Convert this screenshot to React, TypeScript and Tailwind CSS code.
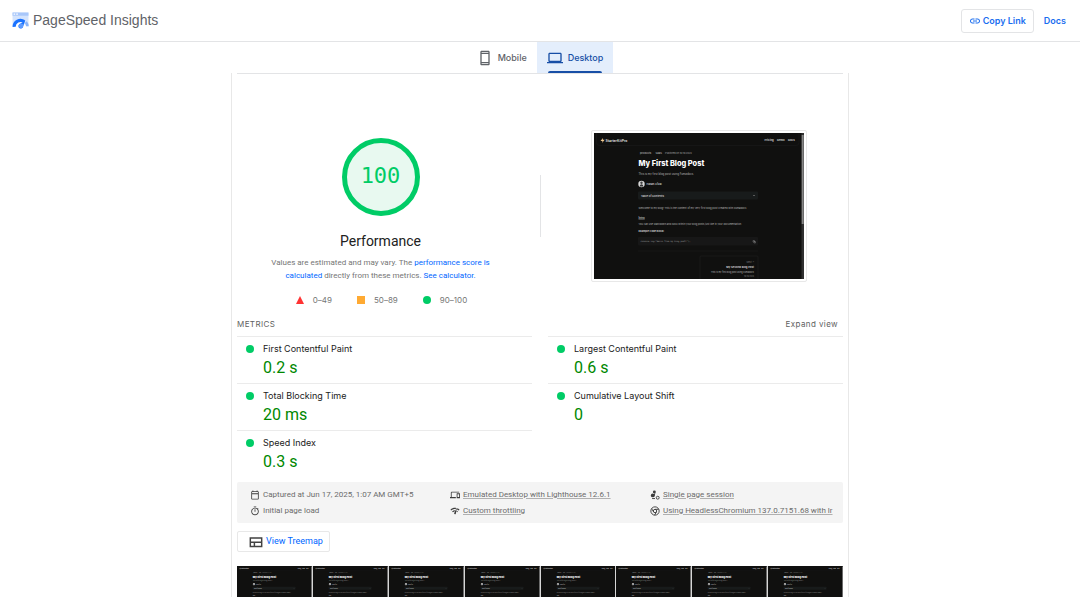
import type { ReactNode } from "react";

type IconProps = { className?: string };

type Metric = { label: string; value: string };

const LEFT_METRICS: Metric[] = [
  { label: "First Contentful Paint", value: "0.2 s" },
  { label: "Total Blocking Time", value: "20 ms" },
  { label: "Speed Index", value: "0.3 s" },
];

const RIGHT_METRICS: Metric[] = [
  { label: "Largest Contentful Paint", value: "0.6 s" },
  { label: "Cumulative Layout Shift", value: "0" },
];

const FRAMES = [0, 1, 2, 3, 4, 5, 6, 7];

function Icon({ d, className }: IconProps & { d: string }) {
  return (
    <svg viewBox="0 0 24 24" fill="currentColor" className={className} aria-hidden="true">
      <path d={d} />
    </svg>
  );
}

const ICONS = {
  link: "M3.9 12c0-1.71 1.39-3.1 3.1-3.1h4V7H7c-2.76 0-5 2.24-5 5s2.24 5 5 5h4v-1.9H7c-1.71 0-3.1-1.39-3.1-3.1zM8 13h8v-2H8v2zm9-6h-4v1.9h4c1.71 0 3.1 1.39 3.1 3.1s-1.39 3.1-3.1 3.1h-4V17h4c2.76 0 5-2.24 5-5s-2.24-5-5-5z",
  phone:
    "M17 1H7c-1.1 0-2 .9-2 2v18c0 1.1.9 2 2 2h10c1.1 0 2-.9 2-2V3c0-1.1-.9-2-2-2zm0 20H7v-1h10v1zm0-3H7V6h10v12zm0-14H7V3h10v1z",
  laptop:
    "M20 18c1.1 0 2-.9 2-2V6c0-1.1-.9-2-2-2H4c-1.1 0-2 .9-2 2v10c0 1.1.9 2 2 2H0v2h24v-2h-4zM4 6h16v10H4V6z",
  date: "M19 3h-1V1h-2v2H8V1H6v2H5c-1.1 0-2 .9-2 2v16c0 1.1.9 2 2 2h14c1.1 0 2-.9 2-2V5c0-1.1-.9-2-2-2zm0 18H5V10h14v11zm0-13H5V5h14v3z",
  devices:
    "M4 6h18V4H4c-1.1 0-2 .9-2 2v11H0v3h14v-3H4V6zm19 2h-6c-.55 0-1 .45-1 1v10c0 .55.45 1 1 1h6c.55 0 1-.45 1-1V9c0-.55-.45-1-1-1zm-1 9h-4v-7h4v7z",
  timer:
    "M15 1H9v2h6V1zm-4 13h2V8h-2v6zm8.03-6.61l1.42-1.42c-.43-.51-.9-.99-1.41-1.41l-1.42 1.42C16.07 4.74 14.12 4 12 4c-4.97 0-9 4.03-9 9s4.02 9 9 9 9-4.03 9-9c0-2.12-.74-4.07-1.97-5.61zM12 20c-3.87 0-7-3.13-7-7s3.13-7 7-7 7 3.13 7 7-3.13 7-7 7z",
  network:
    "M15.9 5c-.17 0-.32.09-.41.23l-.07.15-5.18 11.65c-.16.29-.26.61-.26.96 0 1.11.9 2.01 2.01 2.01.96 0 1.77-.68 1.96-1.59l.01-.03L16.4 5.5c0-.28-.22-.5-.5-.5zM1 9l2 2c2.88-2.88 6.79-4.08 10.53-3.62l1.19-2.68C9.89 3.84 4.74 5.27 1 9zm20 2l2-2c-1.64-1.64-3.55-2.82-5.59-3.57l-.53 2.82c1.5.62 2.9 1.53 4.12 2.75zm-4 4l2-2c-.8-.8-1.7-1.42-2.66-1.89l-.55 2.92c.42.27.83.59 1.21.97zM5 13l2 2c1.13-1.13 2.56-1.79 4.03-2l1.28-2.88c-2.63-.08-5.3.87-7.31 2.88z",
  treemap: "M1 4v17h22V4H1zm2.500 2.500h17V11h-17V6.500zm0 12V13.500H8v5H3.500zm7 0v-5h10v5h-10z",
};

function PageSpeedLogo({ className }: IconProps) {
  return (
    <svg viewBox="0 0 32 32" className={className} aria-hidden="true">
      <path d="M1 1h30v26h-4L16 14 5 27H1z" fill="#d3e3fd" />
      <path d="M1 1h30v6H1z" fill="#a8c7fa" />
      <path d="M3 4h3M8 4h3" stroke="#fff" strokeWidth="2" />
      <path d="M4 28a12 12 0 0 1 19-10" fill="none" stroke="#1a73ff" strokeWidth="6" />
      <path d="M26 19a12 12 0 0 1 3 8" fill="none" stroke="#8ab4f8" strokeWidth="5" />
      <path d="M25 16l-4 11a4.500 4.500 0 1 1-7-4z" fill="#1a73ff" />
      <circle cx="17" cy="26" r="4.500" fill="#5e9bff" />
    </svg>
  );
}

function SamplesIcon({ className }: IconProps) {
  return (
    <svg viewBox="0 0 24 24" fill="currentColor" className={className} aria-hidden="true">
      <circle cx="10.500" cy="4.500" r="3.500" />
      <circle cx="6.500" cy="13" r="4.500" />
      <path d="M7 17l4-10 2 1-3 8z" />
      <circle cx="18.500" cy="18.500" r="3.500" fill="none" stroke="currentColor" strokeWidth="2.2" />
      <path d="M5 20.500h7" stroke="currentColor" strokeWidth="2.2" />
    </svg>
  );
}

function ChromeIcon({ className }: IconProps) {
  return (
    <svg
      viewBox="0 0 24 24"
      fill="none"
      stroke="currentColor"
      strokeWidth="2.2"
      className={className}
      aria-hidden="true"
    >
      <circle cx="12" cy="12" r="10" />
      <circle cx="12" cy="12" r="4" />
      <path d="M12 8h9M8.500 14L4 6.500M15.500 14L11 22" />
    </svg>
  );
}

// The tested page, drawn once and scaled for the preview and the filmstrip
function PageShot({ className }: IconProps) {
  return (
    <svg
      viewBox="0 0 210 146"
      className={className}
      fontFamily="Inter, sans-serif"
      fill="#cfcfcf"
      role="img"
      aria-label="Page screenshot"
    >
      <rect width="210" height="146" fill="#10100f" />
      <path d="M2.500 0v9.500a3 3 0 0 0 3 3h196.500a3 3 0 0 0 3-3V0" fill="none" stroke="#1b1b1b" strokeWidth=".6" />
      <path d="M9 5L6.500 8h2L8 10l2.700-3.200H8.800z" fill="#f0c890" />
      <g fontSize="3.400" fontWeight="700">
        <text x="11.500" y="8.700">StarterKitPro</text>
        <text x="170.500" y="8.300" fontSize="2.700">Pricing</text>
        <text x="183" y="8.300" fontSize="2.700">Demo</text>
        <text x="194" y="8.300" fontSize="2.700">Docs</text>
      </g>
      <g fontSize="2.600" fill="#a5a5a5">
        <text x="46" y="20.500" fontWeight="600">products</text>
        <text x="61.500" y="20.500" fontWeight="600">SaaS</text>
        <text x="71" y="20.500" fontSize="2.300">Published on 10/10/2024</text>
      </g>
      <text x="44.500" y="32.800" fontSize="7.400" fontWeight="800" fill="#fff">My First Blog Post</text>
      <text x="44.500" y="42" fontSize="2.800" fill="#b5b5b5">This is my first blog post using Fumadocs.</text>
      <circle cx="47.500" cy="51" r="3.200" fill="#d8d8d8" />
      <path d="M45.800 53.500c0-3 3.400-3 3.400 0z" fill="#333" />
      <circle cx="47.500" cy="49.800" r="1.200" fill="#444" />
      <text x="52.500" y="52" fontSize="2.600" fontWeight="600">Hasan Afzal</text>
      <rect x="44" y="58.500" width="120" height="8" rx="1" fill="#181b1b" />
      <text x="47" y="63.600" fontSize="2.700" fontWeight="600">Table of Contents</text>
      <path d="M159 62l1 1 1-1" fill="none" stroke="#999" strokeWidth=".5" />
      <text x="44.500" y="75.700" fontSize="2.550" fill="#b5b5b5">
        Welcome to my blog! This is the content of my very first blog post created with Fumadocs.
      </text>
      <text x="44.500" y="85.500" fontSize="2.800" fontWeight="600" textDecoration="underline">Intro</text>
      <text x="44.500" y="91.800" fontSize="2.500" fill="#b5b5b5">
        You can use Markdown and MDX within your blog posts just like in your documentation.
      </text>
      <text x="44.500" y="99.200" fontSize="2.500" fontWeight="700">Example Code Block:</text>
      <rect x="44" y="104" width="120" height="8.500" rx="1" fill="#171717" />
      <text x="46.500" y="109.300" fontSize="2.100" fontFamily="DejaVu Sans Mono, monospace" fill="#aaa">
        console.log("Hello from my blog post!");
      </text>
      <path d="M159 107.500h1.500v1.500H159zM160 108.500h1.500v1.500H160z" fill="none" stroke="#999" strokeWidth=".4" />
      <path d="M44 118h120" stroke="#1e1e1e" strokeWidth=".5" />
      <path d="M106 146v-22a1 1 0 0 1 1-1h56a1 1 0 0 1 1 1v22" fill="none" stroke="#202020" strokeWidth=".6" />
      <g textAnchor="end">
        <text x="160" y="129.500" fontSize="2.400" fill="#777">Next &gt;</text>
        <text x="160" y="134.800" fontSize="2.700" fontWeight="700">My Second Blog Post</text>
        <text x="160" y="139.500" fontSize="2.200" fill="#b5b5b5">This is my first blog post using Fumadocs</text>
        <text x="160" y="143.700" fontSize="1.900" fill="#888">10/10/2024</text>
      </g>
      <rect x="207.500" width="2.500" height="146" fill="#303030" />
      <rect x="207.700" y="2" width="2" height="89" fill="#858585" />
    </svg>
  );
}

function MetricRow({ label, value }: Metric) {
  return (
    <div className="flex h-[47px] gap-[9px] border-t border-[#ebebeb] pl-[9px]">
      <span className="mt-2 size-2 shrink-0 rounded-full bg-[#0c6]" />
      <div>
        <div className="mt-1 text-[9px] leading-4 text-[#212121]">{label}</div>
        <div className="font-['Roboto',sans-serif] text-base leading-[22px] text-[#080]">{value}</div>
      </div>
    </div>
  );
}

function EnvItem({ icon, children, linked }: { icon: ReactNode; children: ReactNode; linked?: boolean }) {
  return (
    <li className="flex min-w-0 items-center gap-[3px] text-[#3c3c3c]">
      {icon}
      <span
        className={
          linked
            ? "overflow-hidden whitespace-nowrap text-[#6b6b6b] underline decoration-[#b0b0b0] underline-offset-1"
            : "whitespace-nowrap text-[#6b6b6b]"
        }
      >
        {children}
      </span>
    </li>
  );
}

export default function App() {
  return (
    <div className="flex h-screen flex-col overflow-hidden bg-white font-['Inter',sans-serif] text-[#212121]">
      <header className="flex h-[42px] shrink-0 items-center border-b border-[#e3e4e6] px-3">
        <PageSpeedLogo className="size-[17px]" />
        <h1 className="ml-1 font-['Liberation_Sans',Arial,sans-serif] text-[14px] text-[#5f6368]">
          PageSpeed Insights
        </h1>
        <button
          type="button"
          className="ml-auto flex h-6 items-center gap-[2px] rounded-[3px] border border-[#e3e4e6] px-[7px] text-[9px] font-semibold text-[#1a6ef0]"
        >
          <Icon d={ICONS.link} className="size-3" />
          Copy Link
        </button>
        <a href="#docs" className="mr-[2px] ml-[10px] text-[9px] font-semibold text-[#1a6ef0]">
          Docs
        </a>
      </header>

      <div role="tablist" className="flex h-[31px] shrink-0 justify-center text-[9px] font-medium">
        <button type="button" role="tab" aria-selected="false" className="flex items-center gap-[5px] px-[10px] text-[#5f6368]">
          <Icon d={ICONS.phone} className="size-4" />
          Mobile
        </button>
        <button
          type="button"
          role="tab"
          aria-selected="true"
          className="relative flex items-center gap-[5px] bg-[#e4eefc] px-[10px] text-[#174ea6]"
        >
          <Icon d={ICONS.laptop} className="size-4" />
          Desktop
          <span className="absolute inset-x-[11px] bottom-0 h-[2px] rounded-t-sm bg-[#174ea6]" />
        </button>
      </div>

      <main className="mx-auto w-full max-w-[618px] flex-1 border-x border-[#e8e8e8] px-[5px]">
        <div className="border-t border-[#e3e4e6]" />

        <section className="grid grid-cols-2 pt-[56px]">
          <div className="flex flex-col items-center pt-2 pr-4">
            <div className="flex size-[78px] items-center justify-center rounded-full border-[5px] border-[#0c6] bg-[#e8f9f0] pb-1 font-['DejaVu_Sans_Mono',monospace] text-[22px] text-[#0c6]">
              100
            </div>
            <h2 className="mt-[15px] font-['Roboto',sans-serif] text-sm leading-5">Performance</h2>
            <p className="mt-[5px] w-[240px] text-center font-['Roboto',sans-serif] text-[8px] leading-[13px] text-[#757575]">
              Values are estimated and may vary. The{" "}
              <a href="#scoring" className="text-[#06f]">performance score is<br />calculated</a> directly from these
              metrics. <a href="#calculator" className="text-[#06f]">See calculator.</a>
            </p>
            <ul className="mt-[10px] flex h-4 items-center gap-[25px] pl-[2px] text-[8px] text-[#757575]">
              <li className="flex items-center gap-[9px]">
                <svg viewBox="0 0 8 8" className="size-2" aria-hidden="true">
                  <path d="M4 0l4 8H0z" fill="#f33" />
                </svg>
                0–49
              </li>
              <li className="flex items-center gap-[9px]">
                <span className="size-2 bg-[#fa3]" />
                50–89
              </li>
              <li className="flex items-center gap-[9px]">
                <span className="size-2 rounded-full bg-[#0c6]" />
                90–100
              </li>
            </ul>
          </div>
          <div className="flex items-start">
            <div className="mt-[45px] h-[62px] w-px bg-[#e3e4e6]" />
            <div className="ml-[50px] rounded-[2px] border border-[#e8e8e8] p-[2px]">
              <PageShot className="h-[146px] w-[210px]" />
            </div>
          </div>
        </section>

        <div className="mt-[6px] flex h-5 items-center justify-between pr-[5px] text-[8px] text-[#616161]">
          <h3 className="tracking-wider">METRICS</h3>
          <button type="button" className="tracking-wider">Expand view</button>
        </div>

        <section className="mt-[2px] grid grid-cols-2 gap-4">
          <div>{LEFT_METRICS.map((m) => <MetricRow key={m.label} {...m} />)}</div>
          <div>{RIGHT_METRICS.map((m) => <MetricRow key={m.label} {...m} />)}</div>
        </section>

        <ul className="mt-[5px] grid grid-cols-[200px_200px_1fr] rounded-[2px] bg-[#f4f4f4] pt-[5px] pr-[10px] pb-1 pl-[13px] font-['Roboto',sans-serif] text-[8px] leading-4">
          <EnvItem icon={<Icon d={ICONS.date} className="size-[10px] shrink-0" />}>
            Captured at Jun 17, 2025, 1:07 AM GMT+5
          </EnvItem>
          <EnvItem linked icon={<Icon d={ICONS.devices} className="size-[10px] shrink-0" />}>
            Emulated Desktop with Lighthouse 12.6.1
          </EnvItem>
          <EnvItem linked icon={<SamplesIcon className="size-[10px] shrink-0" />}>
            Single page session
          </EnvItem>
          <EnvItem icon={<Icon d={ICONS.timer} className="size-[10px] shrink-0" />}>Initial page load</EnvItem>
          <EnvItem linked icon={<Icon d={ICONS.network} className="size-[10px] shrink-0" />}>
            Custom throttling
          </EnvItem>
          <EnvItem linked icon={<ChromeIcon className="size-[10px] shrink-0" />}>
            Using HeadlessChromium 137.0.7151.68 with lr
          </EnvItem>
        </ul>

        <button
          type="button"
          className="mt-2 flex h-[21px] items-center gap-[3px] rounded-[2px] border border-[#e8e8e8] pr-[6px] pl-[11px] font-['Roboto',sans-serif] text-[9px] text-[#06f]"
        >
          <Icon d={ICONS.treemap} className="size-[14px] text-[#424242]" />
          View Treemap
        </button>

        <div className="mt-[14px] grid grid-cols-8 gap-px bg-[#d6d6d6]">
          {FRAMES.map((frame) => (
            <PageShot key={frame} className="w-full" />
          ))}
        </div>
      </main>
    </div>
  );
}
